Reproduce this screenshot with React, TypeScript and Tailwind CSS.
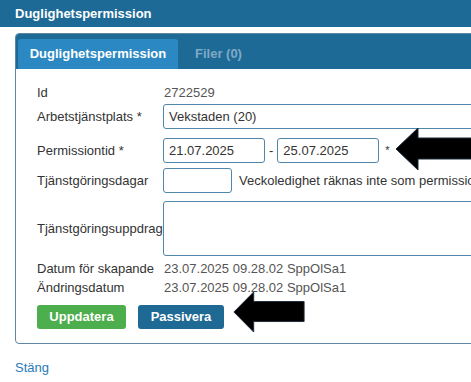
import React from 'react';

const LeftArrow = ({ className }: { className: string }) => (
  <svg className={className} viewBox="0 0 80 44" preserveAspectRatio="none">
    <polygon
      points="1,22 23,1 23,11 79,11 79,32 23,32 23,43"
      fill="#000"
      stroke="#1b2a3a"
      strokeWidth="1"
    />
  </svg>
);

const Row = ({ label, children, className = '' }: { label: string; children: React.ReactNode; className?: string }) => (
  <div className={`flex items-center ${className}`}>
    <div className="w-[126px] shrink-0">{label}</div>
    <div className="flex flex-1 items-center">{children}</div>
  </div>
);

const inputCls = 'h-[25px] rounded-[3px] border border-[#4f86aa] bg-white px-[5px] flex items-center text-[#333]';

export default function App() {
  return (
    <div className="relative h-[382px] w-[471px] overflow-hidden bg-white text-[13px] text-[#333] font-['Liberation_Sans',Arial,sans-serif]">
      <div className="w-[560px]">
        {/* header */}
        <div className="flex h-[27px] items-center bg-[#1d6a96] pl-[15px] font-bold text-white">
          Duglighetspermission
        </div>

        {/* panel */}
        <div className="ml-[15px] mt-[6px] rounded-[4px] border border-[#5d87a3]">
          <div className="flex h-[35px] items-end rounded-t-[3px] bg-[#1d6a96] pl-[2px]">
            <div className="flex h-[30px] w-[160px] items-center justify-center rounded-t-[3px] bg-[#2b88c2] font-bold text-white">
              Duglighetspermission
            </div>
            <div className="flex h-[30px] items-center pl-[17px] font-bold text-[#7fa9c6]">Filer (0)</div>
          </div>

          <div className="pl-[21px] pt-[15px] pb-[14px]">
            <Row label="Id" className="h-[18px]">
              <span className="pl-[1px] text-[#555]">2722529</span>
            </Row>
            <Row label="Arbetstjänstplats *" className="mt-[2px]">
              <div className={`${inputCls} w-[400px]`}>Vekstaden (20)</div>
            </Row>
            <Row label="Permissiontid *" className="mt-[9px]">
              <div className={`${inputCls} w-[102px]`}>21.07.2025</div>
              <span className="mx-[4px]">-</span>
              <div className={`${inputCls} w-[102px]`}>25.07.2025</div>
              <span className="ml-[6px] text-[11px]">*</span>
            </Row>
            <Row label="Tjänstgöringsdagar" className="mt-[5px]">
              <div className={`${inputCls} w-[69px]`}></div>
              <span className="ml-[7px] whitespace-nowrap">Veckoledighet räknas inte som permissionsdag</span>
            </Row>
            <Row label="Tjänstgöringsuppdrag" className="mt-[8px]">
              <div className="h-[55px] w-[400px] rounded-[3px] border border-[#4f86aa] bg-white"></div>
            </Row>
            <Row label="Datum för skapande" className="mt-[3px] h-[19px]">
              <span className="pl-[1px] text-[#555]">23.07.2025 09.28.02 SppOlSa1</span>
            </Row>
            <Row label="Ändringsdatum" className="h-[19px]">
              <span className="pl-[1px] text-[#555]">23.07.2025 09.28.02 SppOlSa1</span>
            </Row>
            <div className="mt-[8px] flex gap-[12px]">
              <button className="h-[24px] w-[89px] rounded-[3px] bg-[#4cae4c] font-bold text-white">Uppdatera</button>
              <button className="h-[24px] w-[86px] rounded-[3px] bg-[#1f6a94] font-bold text-white">Passivera</button>
            </div>
          </div>
        </div>

        <div className="ml-[15px] mt-[14px] text-[#2a7ab8]">Stäng</div>
      </div>

      <LeftArrow className="absolute left-[395px] top-[127px] h-[44px] w-[80px]" />
      <LeftArrow className="absolute left-[233px] top-[291px] h-[42px] w-[72px]" />
    </div>
  );
}
